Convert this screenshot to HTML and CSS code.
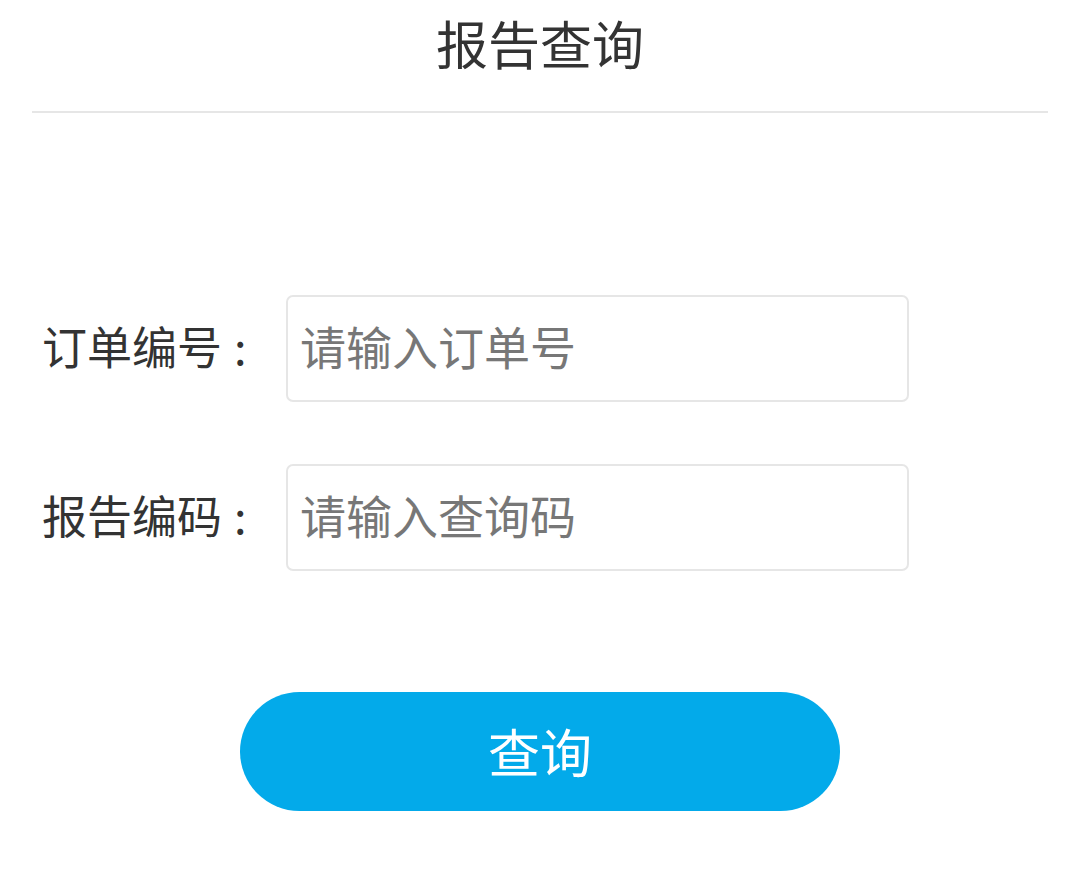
FILE: index.html
```html
<!DOCTYPE html>
<html lang="zh-CN">
<head>
    <meta charset="UTF-8">
    <meta name="viewport" content="width=device-width, initial-scale=1.0">
    <title>报告查询</title>
    <link rel="stylesheet" href="styles.css">
</head>
<body>

<div class="header">
    <h1 class="title">报告查询</h1>
</div>

<form class="queryForm">
    <div class="formRow">
        <label class="formLabel" for="orderNo">订单编号<span class="colon">:</span></label>
        <input class="formInput" type="text" id="orderNo" placeholder="请输入订单号">
    </div>
    <div class="formRow">
        <label class="formLabel" for="reportCode">报告编码<span class="colon">:</span></label>
        <input class="formInput" type="text" id="reportCode" placeholder="请输入查询码">
    </div>
    <button class="queryButton" type="button">查询</button>
</form>

</body>
</html>
```

FILE: styles.css
```css
body {
    margin: 0;
    background: #fff;
    font-family: "Noto Sans CJK SC", "Noto Sans", sans-serif;
    color: #333;
}

.header {
    margin: 0 32px;
    height: 111px;
    border-bottom: 2px solid #e6e6e6;
    display: flex;
    align-items: center;
    justify-content: center;
}

.title {
    margin: 0 0 26px;
    font-size: 52px;
    font-weight: normal;
    color: #333;
}

.queryForm {
    display: flex;
    flex-direction: column;
    padding: 182px 0 0 42px;
}

.formRow {
    display: flex;
    align-items: center;
    margin-bottom: 62px;
}

.formLabel {
    width: 244px;
    font-size: 45px;
    line-height: 1.2;
    padding-bottom: 6px;
    color: #333;
}

.colon {
    margin-left: 12px;
}

.formInput {
    box-sizing: border-box;
    width: 623px;
    height: 107px;
    padding: 0 12px 8px;
    border: 2px solid #e6e6e6;
    border-radius: 7px;
    font-family: inherit;
    font-size: 46px;
    color: #333;
    outline: none;
}

.formInput::placeholder {
    color: #777;
}

.queryButton {
    align-self: flex-start;
    margin: 59px 0 0 198px;
    width: 600px;
    height: 119px;
    padding-bottom: 4px;
    border: none;
    border-radius: 60px;
    background: #03aaea;
    color: #fff;
    font-family: inherit;
    font-size: 52px;
    cursor: pointer;
}
```
